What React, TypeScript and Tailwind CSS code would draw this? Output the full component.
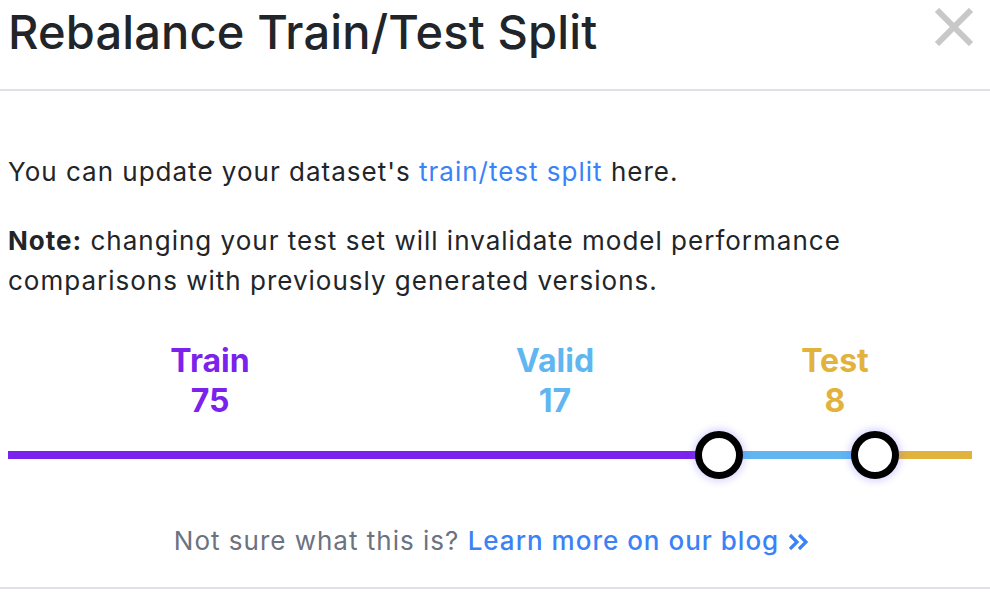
import React, { useState } from "react";

const Knob: React.FC = () => (
  <div className="w-12 h-12 rounded-full bg-white border-[7px] border-black shadow-[0_0_6px_3px_rgba(120,110,255,0.25)] shrink-0 -mx-6 relative z-10" />
);

const App: React.FC = () => {
  const [split] = useState({ train: 75, valid: 17, test: 8 });

  return (
    <div className="w-[990px] h-[596px] bg-white font-['Inter',sans-serif] overflow-hidden">
      <div className="h-[91px] border-b-2 border-[#dee2e6] flex items-start justify-between pl-2 pr-4">
        <h1 className="text-[47px] leading-[64px] font-medium text-[#212529] tracking-[0.15px]">
          Rebalance Train/Test Split
        </h1>
        <button className="mt-2 text-[#c8c8c8]">
          <svg width="40" height="38" viewBox="0 0 40 38">
            <path d="M3 2 L37 36 M37 2 L3 36" stroke="currentColor" strokeWidth="6" />
          </svg>
        </button>
      </div>

      <div className="px-2 text-[#212529] text-[26px] leading-[40px] tracking-[1px]">
        <p className="mt-[61px]">
          You can update your dataset's{" "}
          <a className="text-[#3b82f6]">train/test split</a> here.
        </p>
        <p className="mt-[29px]">
          <b className="font-bold">Note:</b>{" "}
          <span>changing your test set will invalidate model performance
          comparisons with previously generated versions.</span>
        </p>

        <div className="mt-[40px] grid grid-cols-[404px_286px_274px] text-center font-bold text-[32px] leading-[40px] tracking-normal">
          <div className="text-[#7b22ec]">
            <div>Train</div>
            <div>{split.train}</div>
          </div>
          <div className="text-[#5fb6f1]">
            <div>Valid</div>
            <div>{split.valid}</div>
          </div>
          <div className="text-[#e1b33d]">
            <div>Test</div>
            <div>{split.test}</div>
          </div>
        </div>

        <div className="mt-[10px] flex items-center w-[964px] h-12">
          <div className="h-2 bg-[#7b22ec] w-[711px]" />
          <Knob />
          <div className="h-2 bg-[#5fb6f1] w-[156px]" />
          <Knob />
          <div className="h-2 bg-[#e1b33d] flex-1" />
        </div>

        <p className="mt-[42px] text-center text-[#6b7280] -ml-2 flex items-center justify-center">
          <span>Not sure what this is?&nbsp;</span>
          <a className="text-[#3b82f6] font-medium flex items-center gap-[9px]">
            Learn more on our blog
            <svg width="20" height="18" viewBox="0 0 20 18" className="mt-[2px]">
              <path d="M2 2 L9 9 L2 16 M11 2 L18 9 L11 16" fill="none" stroke="currentColor" strokeWidth="3.2" />
            </svg>
          </a>
        </p>
      </div>
      <div className="mt-[26px] border-b-2 border-[#dee2e6]" />
    </div>
  );
};

export default App;
